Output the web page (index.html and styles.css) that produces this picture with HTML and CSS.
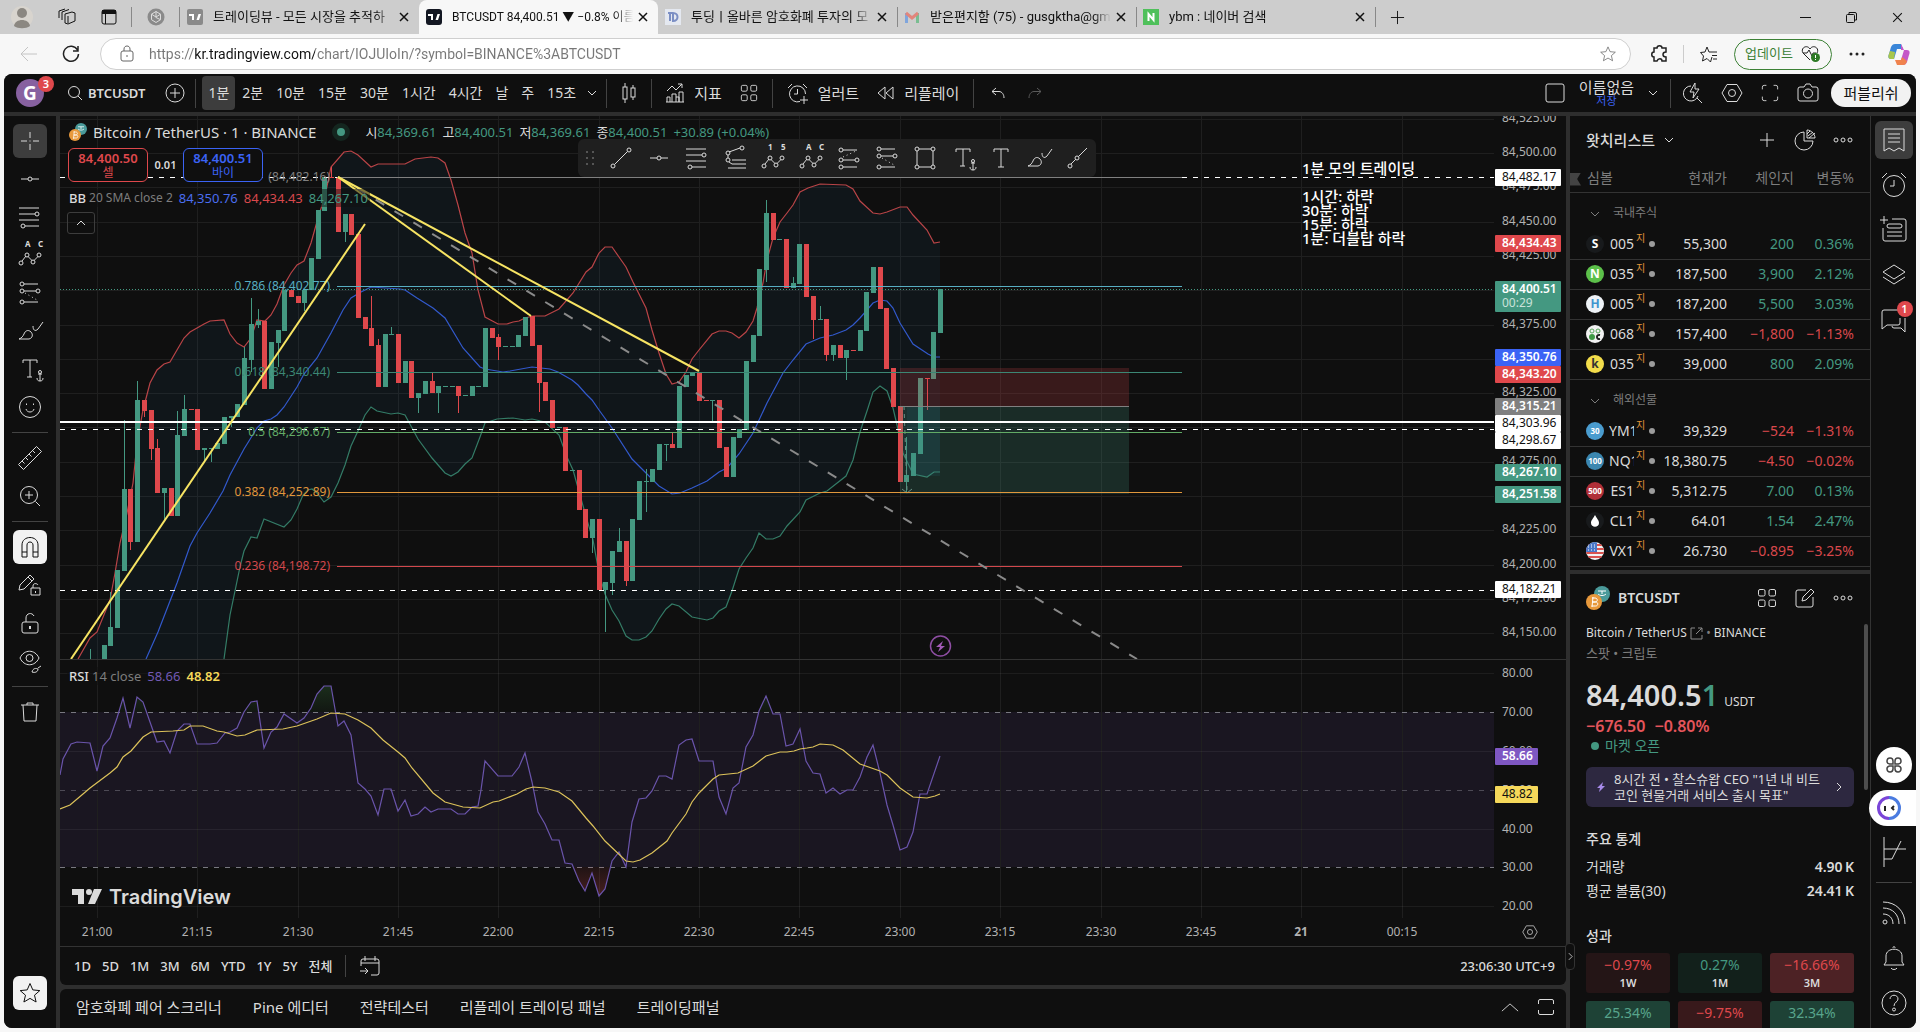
FILE: index.html
```html
<!DOCTYPE html>
<html lang="ko">
<head>
  <meta charset="UTF-8">
  <title>BTCUSDT 84,400.51 ▼ −0.8% 이름없음</title>
  <link rel="stylesheet" href="styles.css">
</head>
<body>

<!-- icon set -->
<svg class="sprite" aria-hidden="true">
  <symbol id="i-x" viewBox="0 0 12 12"><path d="M2 2l8 8M10 2l-8 8"/></symbol>
  <symbol id="i-plus" viewBox="0 0 16 16"><path d="M8 1v14M1 8h14"/></symbol>
  <symbol id="i-down" viewBox="0 0 10 6"><path d="M1 1l4 4 4-4"/></symbol>
  <symbol id="i-right" viewBox="0 0 6 10"><path d="M1 1l4 4-4 4"/></symbol>
  <symbol id="i-up" viewBox="0 0 20 10"><path d="M1 9l9-8 9 8"/></symbol>
  <symbol id="i-dots" viewBox="0 0 20 6"><circle cx="3" cy="3" r="2"/><circle cx="10" cy="3" r="2"/><circle cx="17" cy="3" r="2"/></symbol>
  <symbol id="i-grid" viewBox="0 0 20 20"><rect x="1.500" y="1.500" width="6.500" height="6.500" rx="1.500"/><rect x="12" y="1.500" width="6.500" height="6.500" rx="1.500"/><rect x="1.500" y="12" width="6.500" height="6.500" rx="1.500"/><rect x="12" y="12" width="6.500" height="6.500" rx="1.500"/></symbol>
  <symbol id="i-star" viewBox="0 0 24 24"><path d="M12 2.500l2.800 6.400 7 .7-5.300 4.600 1.600 6.800-6.100-3.600-6.100 3.600 1.600-6.800-5.300-4.600 7-.7z"/></symbol>
  <symbol id="i-cross" viewBox="0 0 28 28"><path d="M14 5v6M14 17v6M5 14h6M17 14h6M13.500 14h1"/></symbol>
  <symbol id="i-trend" viewBox="0 0 28 28"><circle cx="6" cy="22" r="2"/><circle cx="22" cy="6" r="2"/><path d="M7.500 20.500l13-13"/></symbol>
  <symbol id="i-hline" viewBox="0 0 28 28"><path d="M5 14h7M16 14h7"/><circle cx="14" cy="14" r="2"/></symbol>
  <symbol id="i-fib" viewBox="0 0 28 28"><path d="M3 5h20M3 11h16M3 17h20M9 23h14"/><circle cx="21" cy="11" r="2"/><circle cx="7" cy="23" r="2"/></symbol>
  <symbol id="i-fibext" viewBox="0 0 28 28"><path d="M7 14v-3M8 8l11-4M8 18l3 2M11 16h14M11 20h14M7 24h18"/><circle cx="7" cy="9" r="2"/><circle cx="21" cy="4" r="2"/><circle cx="7" cy="16" r="2"/></symbol>
  <symbol id="i-wave" viewBox="0 0 28 28"><circle cx="5" cy="22" r="2"/><circle cx="11" cy="14" r="2"/><circle cx="17" cy="21" r="2"/><circle cx="23" cy="14" r="2"/><path d="M6 20l4-5M12 15.500l4 4M18 19.500l4-4"/></symbol>
  <symbol id="i-long" viewBox="0 0 28 28"><circle cx="6" cy="6" r="2"/><circle cx="6" cy="16" r="2"/><circle cx="22" cy="16" r="2"/><circle cx="6" cy="23" r="2"/><path d="M8 6h14M8 16h12M8 23h14"/><path stroke-dasharray="1 3" d="M8 13l13-6"/></symbol>
  <symbol id="i-short" viewBox="0 0 28 28"><circle cx="6" cy="5" r="2"/><circle cx="6" cy="12" r="2"/><circle cx="22" cy="12" r="2"/><circle cx="6" cy="23" r="2"/><path d="M8 5h14M8 12h12M8 23h14"/><path stroke-dasharray="1 3" d="M9 14l12 7"/></symbol>
  <symbol id="i-rect" viewBox="0 0 28 28"><circle cx="6" cy="5" r="2"/><circle cx="22" cy="5" r="2"/><circle cx="6" cy="23" r="2"/><circle cx="22" cy="23" r="2"/><path d="M8 5h12M8 23h12M6 7v14M22 7v14"/></symbol>
  <symbol id="i-textanchor" viewBox="0 0 28 28"><path d="M7 8V5h14v3M14 5v17M11 22h5M24 18v8M21 23c0 2 1 3 3 3s3-1 3-3M22 19h4"/><circle cx="24" cy="17" r="1.500"/></symbol>
  <symbol id="i-text" viewBox="0 0 28 28"><path d="M7 8V5h14v3M14 5v18M11 23h6"/></symbol>
  <symbol id="i-brush" viewBox="0 0 28 28"><path d="M3 22h10c4-1 4-5 2-7-3-3-6-1-7 2-1 2-2 4-5 5zM17 9c0 4 2 6 5 3l5-7"/></symbol>
  <symbol id="i-path" viewBox="0 0 28 28"><circle cx="7" cy="22" r="2"/><circle cx="14" cy="14" r="2"/><path d="M8 20l5-5M15.500 12.500L24 4"/></symbol>
  <symbol id="i-smile" viewBox="0 0 28 28"><circle cx="14" cy="14" r="10.500"/><path d="M10 16c1 4 7 4 8 0M10.500 10.500v1.500M17.500 10.500v1.500"/></symbol>
  <symbol id="i-ruler" viewBox="0 0 28 28"><path d="M2.500 20.500L20.500 2.500l5 5-18 18zM6 17l2.500 2.500M9.500 13.500l2.500 2.500M13 10l2.500 2.500M16.500 6.500L19 9"/></symbol>
  <symbol id="i-zoom" viewBox="0 0 28 28"><circle cx="13" cy="13" r="8.500"/><path d="M19.500 19.500L24 24M9 13h8M13 9v8"/></symbol>
  <symbol id="i-magnet" viewBox="0 0 28 28"><path d="M6 24V12c0-10 16-10 16 0v12h-5V12c0-4-6-4-6 0v12zM6 19h5M17 19h5"/></symbol>
  <symbol id="i-pencillock" viewBox="0 0 28 28"><path d="M3 19l1-5L14 4l4 4L8 18zM12 6l4 4M15 17h9v7h-9zM17 17v-2c0-3 4-3 5-1"/><path d="M19.500 20v2"/></symbol>
  <symbol id="i-lock" viewBox="0 0 28 28"><rect x="6" y="13" width="16" height="11" rx="2"/><path d="M10 13V9c0-5 6-6 8-2" /><path stroke-width="2" d="M14 17v3"/></symbol>
  <symbol id="i-eye" viewBox="0 0 28 28"><path d="M4 11c4-9 15-9 19 0-4 9-15 9-19 0z"/><circle cx="13.500" cy="11" r="3.500"/><path d="M16 25c1-4 4-4 6-3 0 3-3 4-6 3zM22 21l3-2"/></symbol>
  <symbol id="i-trash" viewBox="0 0 28 28"><path d="M5 7h18M11 7V5h6v2M7 7l1 16h12l1-16"/></symbol>
  <symbol id="i-hex" viewBox="0 0 22 22"><path d="M6 2.500h10l5 8.500-5 8.500H6L1 11z"/><circle cx="11" cy="11" r="3.500"/></symbol>
  <symbol id="i-full" viewBox="0 0 20 20"><path d="M1.500 6V3.500a2 2 0 0 1 2-2H6M14 1.500h2.500a2 2 0 0 1 2 2V6M18.500 14v2.500a2 2 0 0 1-2 2H14M6 18.500H3.500a2 2 0 0 1-2-2V14"/></symbol>
  <symbol id="i-alarm" viewBox="0 0 28 28"><circle cx="14" cy="15" r="10.500"/><path d="M14 9v6h-4M2 7l5-5M26 7l-5-5"/></symbol>
  <symbol id="coin" viewBox="0 0 24 24"><circle cx="16" cy="8" r="8" fill="#4a9a9a" stroke="none"/><path d="M12 5h8M16 5v3M12 8c2 2 6 2 8 0" stroke="#fff"/><circle cx="8" cy="16" r="8" fill="#e8993c" stroke="none"/><path d="M6 12h3c3 0 3 4 0 4H6.500h3c3 0 3 4 0 4H5.500M7 11l-1 10" stroke="#fff"/></symbol>
</svg>

<!-- browser tabs -->
<div class="tabstrip">
  <div class="tab-tools">
    <svg width="22" height="26" viewBox="0 0 22 26"><circle cx="11" cy="13" r="11" fill="#d8d4ce" stroke="none"/><circle cx="11" cy="9" r="5" fill="#8b8781" stroke="none"/><path d="M3 22c1-8 15-8 16 0-4 3-12 3-16 0z" fill="#8b8781" stroke="none"/></svg>
    <svg width="18" height="18" viewBox="0 0 18 18"><path d="M7 6l7-2 3 1v8l-7 3-3-1zM4 12V4l7-2.500M1 10V3l6-2M10 8v7"/></svg>
    <svg width="16" height="16" viewBox="0 0 16 16"><rect x="1" y="1" width="14" height="14" rx="2"/><path d="M1 3h14" stroke-width="4"/><path d="M4.500 5v10"/></svg>
  </div>
  <div class="tab-pin"><svg width="18" height="18" viewBox="0 0 18 18"><circle cx="9" cy="9" r="8.500" fill="#8a8a8a" stroke="none"/><path stroke="#ddd" d="M9 3.500l4.500 2.700v5.500L9 14.500l-4.500-2.800V6.200zM9 3.500v6l4.500 2.200M4.500 6.200L9 9l4.500-2.800"/></svg></div>
  <div class="tab">
    <svg class="fav" width="16" height="16" viewBox="0 0 16 16"><rect width="16" height="16" rx="2" fill="#8a8a8a" stroke="none"/><path d="M2 5h5v6H5V7H2zM9.500 11l2-6H14l-2 6z" fill="#fff" stroke="none"/></svg>
    <span class="tab-title">트레이딩뷰 - 모든 시장을 추적하</span><button class="tab-x" aria-label="탭 닫기"><svg width="12" height="12"><use href="#i-x"/></svg></button>
  </div>
  <div class="tab active">
    <svg class="fav" width="16" height="16" viewBox="0 0 16 16"><rect width="16" height="16" rx="3" fill="#131722" stroke="none"/><path d="M2 5h5v6H5V7H2zM9.500 11l2-6H14l-2 6z" fill="#fff" stroke="none"/></svg>
    <span class="tab-title long">BTCUSDT 84,400.51 ▼ −0.8% 이름</span><button class="tab-x" aria-label="탭 닫기"><svg width="12" height="12"><use href="#i-x"/></svg></button>
  </div>
  <div class="tab">
    <svg class="fav" width="16" height="16" viewBox="0 0 16 16"><rect width="16" height="16" fill="#e4e8f0" stroke="none"/><path d="M3 4h4M5 4v8M8 4c6 0 6 8 0 8z" stroke="#7c8fc4" stroke-width="2"/></svg>
    <span class="tab-title">투딩ㅣ올바른 암호화폐 투자의 모</span><button class="tab-x" aria-label="탭 닫기"><svg width="12" height="12"><use href="#i-x"/></svg></button>
  </div>
  <div class="tab line">
    <svg class="fav" width="16" height="16" viewBox="0 0 16 16"><path d="M2.500 14V4" stroke="#7fa5dc" stroke-width="3"/><path d="M13.500 14V4" stroke="#79bd91" stroke-width="3"/><path d="M2 4l6 5 6-5" stroke="#e2857b" stroke-width="3"/></svg>
    <span class="tab-title">받은편지함 (75) - gusgktha@gma</span><button class="tab-x" aria-label="탭 닫기"><svg width="12" height="12"><use href="#i-x"/></svg></button>
  </div>
  <div class="tab line">
    <svg class="fav" width="16" height="16" viewBox="0 0 16 16"><rect width="16" height="16" fill="#4fc05b" stroke="none"/><path d="M5.500 12V5l5 6V4" stroke="#fff" stroke-width="2"/></svg>
    <span class="tab-title">ybm : 네이버 검색</span><button class="tab-x" aria-label="탭 닫기"><svg width="12" height="12"><use href="#i-x"/></svg></button>
  </div>
  <button class="newtab" aria-label="새 탭"><svg width="15" height="15"><use href="#i-plus"/></svg></button>
  <div class="win">
    <button aria-label="최소화"><svg width="11" height="11" viewBox="0 0 11 11"><path d="M0 5.500h11"/></svg></button>
    <button aria-label="복원"><svg width="11" height="11" viewBox="0 0 11 11"><rect x=".5" y="2.500" width="8" height="8" rx="1"/><path d="M3 2.500V.5h6a1.500 1.500 0 0 1 1.500 1.500v6h-2"/></svg></button>
    <button aria-label="닫기"><svg width="13" height="13"><use href="#i-x"/></svg></button>
  </div>
</div>

<!-- address bar -->
<div class="navbar">
  <button class="nav back" aria-label="뒤로"><svg width="18" height="16" viewBox="0 0 18 16"><path d="M17 8H1M8 1L1 8l7 7"/></svg></button>
  <button class="nav" aria-label="새로 고침"><svg width="18" height="18" viewBox="0 0 18 18"><path stroke-width="1.500" d="M15.500 5A7.500 7.500 0 1 0 16.500 9M16 1v5h-5"/></svg></button>
  <div class="urlbox">
    <svg width="14" height="18" viewBox="0 0 14 18"><rect x="1" y="6" width="12" height="10" rx="2"/><path d="M4 6V4c0-4 6-4 6 0v2M7 10v2"/></svg>
    <input type="text" aria-label="주소" value="https://kr.tradingview.com/chart/IOJUIoIn/?symbol=BINANCE%3ABTCUSDT">
    <button aria-label="즐겨찾기 추가"><svg width="18" height="18"><use href="#i-star"/></svg></button>
  </div>
  <button class="nav" aria-label="확장"><svg width="18" height="18" viewBox="0 0 18 18"><path stroke-width="1.500" d="M6 3c0-3 5-3 5 0h4v4c-4 0-4 5 0 5v4h-4c0-3-4-3-5 0H3v-4c-3 0-3-5 0-5V3z"/></svg></button>
  <i class="vline"></i>
  <button class="nav" aria-label="즐겨찾기"><svg width="18" height="18" viewBox="0 0 18 18"><path d="M12 12l-1.500 5L7 13.500 2.500 16l1-5L.5 7.500 5 7l2-5 2 5h8M12 10.500h5M13 14h4"/></svg></button>
  <button class="update">업데이트 <svg width="20" height="18" viewBox="0 0 20 18"><path stroke="#222" d="M9 15L2 8c-3-5 4-9 7-4 3-5 10-1 7 4M2 8h4l2-3 3 6 1-3h3"/><circle cx="14.500" cy="12.500" r="4.500" fill="#2d7a25" stroke="none"/><path stroke="#fff" d="M14.500 10v3M14.500 14v1"/></svg></button>
  <button class="nav" aria-label="설정"><svg width="16" height="4" viewBox="0 0 16 4"><g fill="#222" stroke="none"><circle cx="2" cy="2" r="1.500"/><circle cx="8" cy="2" r="1.500"/><circle cx="14" cy="2" r="1.500"/></g></svg></button>
  <button class="nav" aria-label="Copilot"><svg width="22" height="22" viewBox="0 0 22 22"><path d="M7 1h6l2 5H9L6 16H3c-3 0-3-3-2-5l2-7c1-2 2-3 4-3z" fill="#3a86d8" stroke="none"/><path d="M3 16c-3 0-3-3-2-5l1-3 5 1-1 7z" fill="#a8c64a" stroke="none"/><path d="M13 1l3 6h3c3 0 3 3 2 5l-2 7c-1 2-2 3-4 3H9l4-5 3-10h-3z" fill="#c558c8" stroke="none"/><path d="M9 22l-2-5h6l1-3 5 4c-1 3-2 4-4 4z" fill="#f0834e" stroke="none"/></svg></button>
</div>

<div class="app">

  <!-- chart header -->
  <header class="topbar">
    <button class="avatar" aria-label="계정">G<span class="badge">3</span></button>
    <button class="tb symbol"><svg width="16" height="16" viewBox="0 0 16 16"><circle cx="7" cy="7" r="5.500"/><path d="M11 11l4 4"/></svg>BTCUSDT</button>
    <button class="tb" aria-label="비교"><svg width="20" height="20" viewBox="0 0 20 20"><circle cx="10" cy="10" r="9"/><path d="M10 5v10M5 10h10"/></svg></button>
    <i class="vline"></i>
    <div class="intervals">
      <button class="tb on">1분</button><button class="tb">2분</button><button class="tb">10분</button><button class="tb">15분</button><button class="tb">30분</button><button class="tb">1시간</button><button class="tb">4시간</button><button class="tb">날</button><button class="tb">주</button><button class="tb">15초</button>
      <button class="tb" aria-label="더보기"><svg width="10" height="6"><use href="#i-down"/></svg></button>
    </div>
    <i class="vline"></i>
    <button class="tb" aria-label="캔들"><svg width="16" height="20" viewBox="0 0 16 20"><path d="M4 0v4M4 16v4M12 2v3M12 14v3"/><rect x="2" y="4" width="4" height="12"/><rect x="10" y="5" width="4" height="9"/></svg></button>
    <i class="vline"></i>
    <button class="tb big"><svg width="19" height="20" viewBox="0 0 19 20"><path d="M1 8l5-5 4 4 6-6M12 1h4v4M1 19v-5h3v5M6 19v-8h4v8M10 14h3v5M13 19V9h4v10M0 19h18"/></svg>지표</button>
    <button class="tb" aria-label="템플릿"><svg width="18" height="18"><use href="#i-grid"/></svg></button>
    <i class="vline"></i>
    <button class="tb big"><svg width="22" height="22" viewBox="0 0 22 22"><path d="M13 19.500A8 8 0 1 1 18.500 12M10.500 7v5H7M1 6l4-4M20 6l-4-4M17 14v8M13 18h8"/></svg>얼러트</button>
    <button class="tb big"><svg width="18" height="14" viewBox="0 0 18 14"><path d="M8 1v12L1 7zM16 1v12L9 7z"/></svg>리플레이</button>
    <i class="vline"></i>
    <button class="tb undo" aria-label="실행 취소"><svg width="14" height="12" viewBox="0 0 14 12"><path d="M5 1L1 4.500 5 8M1 4.500h7c3 0 5 3 5 6.500"/></svg></button>
    <button class="tb undo dim" aria-label="다시 실행"><svg width="14" height="12" viewBox="0 0 14 12"><path d="M9 1l4 3.500L9 8M13 4.500H6c-3 0-5 3-5 6.500"/></svg></button>
    <div class="topright">
      <button class="tb" aria-label="레이아웃"><svg width="20" height="20" viewBox="0 0 20 20"><rect x="1" y="1" width="18" height="18" rx="2"/></svg></button>
      <button class="tb layoutname"><span>이름없음</span><small>저장</small></button>
      <button class="tb" aria-label="레이아웃 관리"><svg width="10" height="6"><use href="#i-down"/></svg></button>
      <i class="vline"></i>
      <button class="tb" aria-label="빠른 찾기"><svg width="20" height="22" viewBox="0 0 20 22"><path d="M8 4a7.500 7.500 0 1 0 7 10M14 16l5 5M12 1L7 10h4l-1 6 6-9h-4z"/></svg></button>
      <button class="tb" aria-label="설정"><svg width="22" height="22"><use href="#i-hex"/></svg></button>
      <button class="tb" aria-label="풀스크린"><svg width="18" height="18"><use href="#i-full"/></svg></button>
      <button class="tb" aria-label="스냅샷"><svg width="22" height="20" viewBox="0 0 22 20"><path d="M3 4h4l2-3h4l2 3h4a2 2 0 0 1 2 2v10a2 2 0 0 1-2 2H3a2 2 0 0 1-2-2V6a2 2 0 0 1 2-2z"/><circle cx="11" cy="10.500" r="4.500"/></svg></button>
      <button class="publish">퍼블리쉬</button>
    </div>
  </header>

  <!-- drawing tools -->
  <nav class="tools">
    <button class="on" aria-label="커서"><svg width="28" height="28"><use href="#i-cross"/></svg></button>
    <button aria-label="추세선"><svg width="28" height="28"><use href="#i-hline"/></svg></button>
    <button aria-label="피보나치"><svg width="28" height="28"><use href="#i-fib"/></svg></button>
    <button class="letters" aria-label="패턴"><span>A</span><span>C</span><svg width="28" height="28"><use href="#i-wave"/></svg></button>
    <button aria-label="예측"><svg width="28" height="28"><use href="#i-short"/></svg></button>
    <button aria-label="브러시"><svg width="28" height="28"><use href="#i-brush"/></svg></button>
    <button aria-label="텍스트"><svg width="28" height="28"><use href="#i-textanchor"/></svg></button>
    <button aria-label="아이콘"><svg width="28" height="28"><use href="#i-smile"/></svg></button>
    <hr>
    <button aria-label="측정"><svg width="28" height="28"><use href="#i-ruler"/></svg></button>
    <button aria-label="확대"><svg width="28" height="28"><use href="#i-zoom"/></svg></button>
    <hr>
    <button class="white" aria-label="자석"><svg width="28" height="28"><use href="#i-magnet"/></svg></button>
    <button aria-label="그리기 유지"><svg width="28" height="28"><use href="#i-pencillock"/></svg></button>
    <button aria-label="잠그기"><svg width="28" height="28"><use href="#i-lock"/></svg></button>
    <button aria-label="숨기기"><svg width="28" height="28"><use href="#i-eye"/></svg></button>
    <hr>
    <button aria-label="제거"><svg width="28" height="28"><use href="#i-trash"/></svg></button>
    <button class="white last" aria-label="즐겨찾기"><svg width="24" height="24"><use href="#i-star"/></svg></button>
  </nav>

  <main class="center">
    <section class="chart">
      <div class="pane">
        <svg id="plot" class="fill"></svg>
        <div class="legend">
          <div class="title-row">
            <svg width="18" height="20"><use href="#coin"/></svg>
            <h1>Bitcoin / TetherUS · 1 · BINANCE</h1>
            <i class="live"></i>
            <span class="ohlc"><b>시</b>84,369.61</span>
            <span class="ohlc"><b>고</b>84,400.51</span>
            <span class="ohlc"><b>저</b>84,369.61</span>
            <span class="ohlc"><b>종</b>84,400.51</span>
            <span class="ohlc">+30.89 (+0.04%)</span>
          </div>
          <div class="trade-row">
            <button class="sell">84,400.50<span>셀</span></button>
            <span class="spread">0.01</span>
            <button class="buy">84,400.51<span>바이</span></button>
          </div>
          <div class="ind-row"><b>BB</b><span class="mute">20 SMA close 2</span><span class="c-blue">84,350.76</span><span class="c-red">84,434.43</span><span class="c-green">84,267.10</span></div>
          <button class="collapse" aria-label="접기"><svg width="10" height="6" viewBox="0 0 10 6"><path d="M1 5l4-4 4 4"/></svg></button>
        </div>
        <div class="note">1분 모의 트레이딩<br><br>1시간: 하락<br>30분: 하락<br>15분: 하락<br>1분: 더블탑 하락</div>
        <div class="favbar">
          <svg class="grip" width="8" height="14" viewBox="0 0 8 14"><path stroke-dasharray="2 4" stroke-width="2" d="M1 0v14M7 0v14"/></svg>
          <button aria-label="추세선"><svg width="28" height="28"><use href="#i-trend"/></svg></button>
          <button aria-label="가로줄"><svg width="28" height="28"><use href="#i-hline"/></svg></button>
          <button aria-label="되돌림"><svg width="28" height="28"><use href="#i-fib"/></svg></button>
          <button aria-label="확장"><svg width="28" height="28"><use href="#i-fibext"/></svg></button>
          <button class="letters" aria-label="엘리엇 임펄스"><span>1</span><span>5</span><svg width="28" height="28"><use href="#i-wave"/></svg></button>
          <button class="letters" aria-label="엘리엇 조정"><span>A</span><span>C</span><svg width="28" height="28"><use href="#i-wave"/></svg></button>
          <button aria-label="롱 포지션"><svg width="28" height="28"><use href="#i-long"/></svg></button>
          <button aria-label="숏 포지션"><svg width="28" height="28"><use href="#i-short"/></svg></button>
          <button aria-label="사각형"><svg width="28" height="28"><use href="#i-rect"/></svg></button>
          <button aria-label="앵커 텍스트"><svg width="28" height="28"><use href="#i-textanchor"/></svg></button>
          <button aria-label="텍스트"><svg width="28" height="28"><use href="#i-text"/></svg></button>
          <button aria-label="브러시"><svg width="28" height="28"><use href="#i-brush"/></svg></button>
          <button aria-label="패스"><svg width="28" height="28"><use href="#i-path"/></svg></button>
        </div>
      </div>
      <div class="axis"><svg id="priceAxis" class="fill"></svg></div>
      <div class="pane rsi">
        <svg id="rsiPlot" class="fill"></svg>
        <div class="ind-row rsi-legend"><b>RSI</b><span class="mute">14 close</span><span class="c-purple">58.66</span><span class="c-yellow">48.82</span></div>
        <a class="tvlogo" href="#"><svg width="30" height="16" viewBox="0 0 30 16"><path fill="#dbdbdb" stroke="none" d="M0 0h12v15H6V6H0zM22 0h8l-7 15h-7z"/><circle cx="17" cy="3" r="3" fill="#dbdbdb" stroke="none"/></svg>TradingView</a>
      </div>
      <div class="axis rsi"><svg id="rsiAxis" class="fill"></svg></div>
      <div class="timeaxis"><svg id="timeAxis" class="fill"></svg></div>
      <div class="axis-gear"><button aria-label="축 설정"><svg width="16" height="16"><use href="#i-hex"/></svg></button></div>
    </section>
    <div class="ranges">
      <button>1D</button><button>5D</button><button>1M</button><button>3M</button><button>6M</button><button>YTD</button><button>1Y</button><button>5Y</button><button>전체</button>
      <i class="vline"></i>
      <button aria-label="날짜로 이동"><svg width="20" height="20" viewBox="0 0 20 20"><path d="M1 10V5a2 2 0 0 1 2-2h14a2 2 0 0 1 2 2v12a2 2 0 0 1-2 2h-6M1 7h18M5 0v5M15 0v5M0 15h8M5 12l3 3-3 3"/></svg></button>
      <span class="clock">23:06:30 UTC+9</span>
    </div>
    <div class="bottomtabs">
      <button>암호화폐 페어 스크리너</button><button>Pine 에디터</button><button>전략테스터</button><button>리플레이 트레이딩 패널</button><button>트레이딩패널</button>
      <div class="bt-right">
        <button aria-label="열기"><svg width="18" height="9"><use href="#i-up"/></svg></button>
        <button aria-label="최대화"><svg width="18" height="18"><path d="M1.500 6V3a1.500 1.500 0 0 1 1.500-1.500h12A1.500 1.500 0 0 1 16.500 3v3M16.500 12v3a1.500 1.500 0 0 1-1.500 1.500H3A1.500 1.500 0 0 1 1.500 15v-3"/></svg></button>
      </div>
    </div>
    <button class="handle" aria-label="패널 접기"><svg width="5" height="9"><use href="#i-right"/></svg></button>
  </main>

  <aside class="side">
    <section class="watch">
      <div class="side-head">
        <button class="wl-name">왓치리스트 <svg width="10" height="6"><use href="#i-down"/></svg></button>
        <button aria-label="심볼 추가"><svg width="16" height="16"><use href="#i-plus"/></svg></button>
        <button aria-label="분석"><svg width="22" height="22" viewBox="0 0 22 22"><path d="M10 3a9 9 0 1 0 9 9h-9zM13 1c4 0 8 4 8 8h-8zM14 7l5-4M15 9l6-5M13 5l3-3"/></svg></button>
        <button aria-label="더보기"><svg width="20" height="6"><use href="#i-dots"/></svg></button>
      </div>
      <table>
        <colgroup><col><col class="w-price"><col class="w-chg"><col class="w-pct"></colgroup>
        <thead><tr><th>심볼</th><th>현재가</th><th>체인지</th><th>변동%</th></tr></thead>
        <tbody>
          <tr class="group"><td colspan="4"><svg width="10" height="6"><use href="#i-down"/></svg>국내주식</td></tr>
          <tr><td><div class="tick"><i class="lg l-s">S</i><span>005</span><sup>지</sup><i class="pt"></i></div></td><td>55,300</td><td class="up">200</td><td class="up">0.36%</td></tr>
          <tr><td><div class="tick"><i class="lg l-n">N</i><span>035</span><sup>지</sup><i class="pt"></i></div></td><td>187,500</td><td class="up">3,900</td><td class="up">2.12%</td></tr>
          <tr><td><div class="tick"><i class="lg l-h">H</i><span>005</span><sup>지</sup><i class="pt"></i></div></td><td>187,200</td><td class="up">5,500</td><td class="up">3.03%</td></tr>
          <tr><td><div class="tick"><i class="lg l-c"><svg width="12" height="12" viewBox="0 0 12 12"><circle cx="3" cy="3" r="2" stroke="#57a55a"/><circle cx="9" cy="3" r="2" stroke="#57a55a"/><circle cx="3" cy="9" r="3" fill="#3f9a45" stroke="none"/><path d="M11 7c-4-1-4 5 0 4" stroke="#222" stroke-width="2"/></svg></i><span>068</span><sup>지</sup><i class="pt"></i></div></td><td>157,400</td><td class="dn">−1,800</td><td class="dn">−1.13%</td></tr>
          <tr><td><div class="tick"><i class="lg l-k">k</i><span>035</span><sup>지</sup><i class="pt"></i></div></td><td>39,000</td><td class="up">800</td><td class="up">2.09%</td></tr>
          <tr class="group"><td colspan="4"><svg width="10" height="6"><use href="#i-down"/></svg>해외선물</td></tr>
          <tr><td><div class="tick"><i class="lg sm l-30">30</i><span>YM1</span><sup>지</sup><i class="pt"></i></div></td><td>39,329</td><td class="dn">−524</td><td class="dn">−1.31%</td></tr>
          <tr><td><div class="tick"><i class="lg sm l-100">100</i><span>NQ1</span><sup>지</sup><i class="pt"></i></div></td><td>18,380.75</td><td class="dn">−4.50</td><td class="dn">−0.02%</td></tr>
          <tr><td><div class="tick"><i class="lg sm l-500">500</i><span>ES1</span><sup>지</sup><i class="pt"></i></div></td><td>5,312.75</td><td class="up">7.00</td><td class="up">0.13%</td></tr>
          <tr><td><div class="tick"><i class="lg l-s"><svg width="8" height="12" viewBox="0 0 8 12"><path d="M4 0c2 4 4 5 4 8 0 5-8 5-8 0 0-3 2-4 4-8z" fill="#fff" stroke="none"/></svg></i><span>CL1</span><sup>지</sup><i class="pt"></i></div></td><td>64.01</td><td class="up">1.54</td><td class="up">2.47%</td></tr>
          <tr><td><div class="tick"><i class="lg l-us"><svg width="18" height="18" viewBox="0 0 18 18"><path stroke="#d9534f" stroke-width="2" d="M0 3h18M0 7h18M0 11h18M0 15h18"/><rect width="11" height="10" fill="#4a78c8" stroke="none"/><path stroke="#fff" stroke-dasharray="1 2" d="M2 3h8M2 5h8M2 8h8"/></svg></i><span>VX1</span><sup>지</sup><i class="pt"></i></div></td><td>26.730</td><td class="dn">−0.895</td><td class="dn">−3.25%</td></tr>
        </tbody>
      </table>
    </section>

    <section class="detail">
      <div class="side-head">
        <svg width="24" height="24"><use href="#coin"/></svg><h2>BTCUSDT</h2>
        <button aria-label="보기"><svg width="20" height="20"><use href="#i-grid"/></svg></button>
        <button aria-label="메모"><svg width="20" height="20" viewBox="0 0 20 20"><path d="M11 2H3a2 2 0 0 0-2 2v13a2 2 0 0 0 2 2h13a2 2 0 0 0 2-2V9M7 13l1-4 8-8 3 3-8 8z"/></svg></button>
        <button aria-label="더보기"><svg width="20" height="6"><use href="#i-dots"/></svg></button>
      </div>
      <div class="detail-body">
        <p class="name"><a href="#">Bitcoin / TetherUS <svg width="13" height="13" viewBox="0 0 13 13"><path d="M5 1H1v11h11V8M8 1h4v4M12 1L6 7"/></svg></a> <i>•</i> BINANCE</p>
        <p class="kind">스팟 • 크립토</p>
        <p class="price">84,400.5<em>1</em><small>USDT</small></p>
        <p class="delta"><span>−676.50</span><span>−0.80%</span></p>
        <p class="market"><i></i>마켓 오픈</p>
        <a class="news" href="#"><svg width="8" height="10" viewBox="0 0 8 10"><path d="M6 0L0 6h3l-1 4 6-6H5z" fill="#a78bea" stroke="none"/></svg><span>8시간 전 • 찰스슈왑 CEO "1년 내 비트코인 현물거래 서비스 출시 목표"</span><svg width="6" height="10"><use href="#i-right"/></svg></a>
        <h3>주요 통계</h3>
        <dl>
          <div><dt>거래량</dt><dd>4.90&#8239;K</dd></div>
          <div><dt>평균 볼륨(30)</dt><dd>24.41&#8239;K</dd></div>
        </dl>
        <h3 class="perf-title">성과</h3>
        <div class="perf">
          <div class="r1">−0.97%<b>1W</b></div><div class="g1">0.27%<b>1M</b></div><div class="r3">−16.66%<b>3M</b></div>
          <div class="g3">25.34%</div><div class="r2">−9.75%</div><div class="g3">32.34%</div>
        </div>
      </div>
      <i class="scroll"></i>
    </section>
  </aside>

  <nav class="rail">
    <button class="on" aria-label="왓치리스트"><svg width="28" height="28" viewBox="0 0 28 28"><path d="M4 3h20v22l-5-3-5 3-5-3-5 3zM8 8h12M8 12h12M8 16h12"/></svg></button>
    <button aria-label="얼러트"><svg width="28" height="28"><use href="#i-alarm"/></svg></button>
    <button aria-label="뉴스"><svg width="28" height="28" viewBox="0 0 28 28"><path d="M3 12v11a2 2 0 0 0 2 2h19a2 2 0 0 0 2-2V5a2 2 0 0 0-2-2H12M4 0v8M0 4h8M7 16h15M7 20h15"/><rect x="7" y="8" width="15" height="4" rx="2"/></svg></button>
    <button aria-label="객체 트리"><svg width="28" height="28" viewBox="0 0 28 28"><path d="M14 4l11 7-11 7-11-7zM3 16l11 7 11-7"/></svg></button>
    <button class="chat" aria-label="대화"><svg width="28" height="28" viewBox="0 0 28 28"><path d="M18 4H4a2 2 0 0 0-2 2v17l5-4h11a2 2 0 0 0 2-2v-5M25 12v14l-4-4h-7a2 2 0 0 1-2-2"/></svg><span class="badge">1</span></button>
    <div class="rail-low">
      <button class="round" aria-label="위젯"><svg width="18" height="18" viewBox="0 0 18 18"><path stroke="#444" stroke-width="1.500" d="M8 8H4.500a3 3 0 1 1 3.500-3zM10 8V5a3 3 0 1 1 3.500 3zM8 10v3a3 3 0 1 1-3.500-3zM10 10h3.500a3 3 0 1 1-3.500 3z"/></svg></button>
      <button class="bot" aria-label="도우미"><svg width="24" height="24" viewBox="0 0 24 24"><path d="M12 1.500a10.500 10.500 0 0 1 0 21" stroke="#4a7be0" stroke-width="3"/><path d="M12 22.500a10.500 10.500 0 0 1 0-21" stroke="#7a45d8" stroke-width="3"/><path stroke="#222" stroke-width="2" d="M8 10v5M17 10l-2 2 2 2"/></svg></button>
      <button aria-label="파인"><svg width="28" height="32" viewBox="0 0 28 32"><path d="M4 1v30M4 13h22M21 5l-9 18H4"/></svg></button>
      <hr>
      <button aria-label="스트림"><svg width="28" height="28" viewBox="0 0 28 28"><circle cx="5" cy="23" r="2"/><path d="M3 15c6 0 10 4 10 10M3 9c10 0 16 7 16 16M3 3c13 0 22 9 22 22"/></svg></button>
      <button aria-label="알림"><svg width="28" height="28" viewBox="0 0 28 28"><path d="M4 21h20l-2-3v-6c0-9-16-9-16 0v6zM11 24c1 2 5 2 6 0M13 4c0-2 2-2 2 0"/></svg></button>
      <button aria-label="도움말"><svg width="28" height="28" viewBox="0 0 28 28"><circle cx="14" cy="14" r="12"/><path d="M10 10c0-5 8-5 8 0 0 3-4 3-4 7"/><circle cx="14" cy="20.500" r="1.500"/></svg></button>
    </div>
  </nav>
</div>

<script src="chart.js"></script>
</body>
</html>
```

FILE: styles.css
```css
* { box-sizing: border-box; }

html, body { height: 100%; }

body {
  margin: 0;
  display: flex;
  flex-direction: column;
  background: #f7f7f7;
  font-family: "Noto Sans", "Noto Sans CJK KR", sans-serif;
  font-size: 13px;
  line-height: 18px;
  overflow: hidden;
}

button, input { font: inherit; color: inherit; background: none; border: 0; padding: 0; margin: 0; }
button { cursor: pointer; display: inline-flex; align-items: center; justify-content: center; white-space: nowrap; }
svg { fill: none; stroke: currentColor; stroke-width: 1; flex: none; }
h1, h2, h3, p, dl, dd { margin: 0; }
a { color: inherit; text-decoration: none; }
.sprite { position: absolute; width: 0; height: 0; }
.vline { width: 1px; height: 29px; background: #434343; flex: none; }
.c-blue { color: #4a6df0; }
.c-red { color: #d9484c; }
.c-green { color: #449881; }
.c-purple { color: #7259b4; }
.c-yellow { color: #f5d85a; font-weight: 600; }

/* browser */
.tabstrip, .navbar { font-family: Roboto, "Noto Sans CJK KR", sans-serif; }
.tabstrip { display: flex; align-items: center; height: 34px; background: #cdcdcd; color: #111; flex: none; }
.tab-tools { display: flex; align-items: center; gap: 25px; width: 132px; padding-left: 11px; height: 20px; border-right: 1px solid #888; }
.tab-pin { width: 48px; height: 20px; display: flex; align-items: center; justify-content: center; border-right: 1px solid #888; }
.tab { display: flex; align-items: center; gap: 10px; width: 239px; height: 34px; padding: 0 9px 0 7px; position: relative; }
.tab.active { background: #f7f7f7; border-radius: 8px 8px 0 0; }
.tab.line::before { content: ""; position: absolute; left: 0; top: 7px; width: 1px; height: 20px; background: #888; }
.tab-title {
  flex: 1; overflow: hidden; white-space: nowrap; margin-right: -6px;
  -webkit-mask-image: linear-gradient(to right, #000 90%, transparent);
}
.tab-title.long { font-size: 12px; }
.tab-x svg { stroke-width: 1.5; }
.newtab { width: 44px; height: 20px; border-left: 1px solid #888; }
.win { margin-left: auto; display: flex; }
.win button { width: 46px; height: 34px; }
.navbar { display: flex; align-items: center; height: 40px; flex: none; color: #222; padding: 0 0 0 8px; }
.nav { width: 42px; height: 32px; }
.navbar .back { color: #c4c4c4; }
.urlbox {
  flex: 1; display: flex; align-items: center; gap: 15px; height: 32px; margin: 0 8px; padding: 0 13px 0 19px;
  background: #fff; border: 1px solid #cfcfcf; border-radius: 16px; color: #666;
}
.urlbox input {
  flex: 1; height: 30px; outline: 0; font-size: 14px;
  background: linear-gradient(to right, #777 46px, #111 46px, #111 166px, #777 166px);
  -webkit-background-clip: text; -webkit-text-fill-color: transparent;
}
.navbar .vline { height: 18px; background: #ccc; margin: 0 4px 0 2px; }
.update { width: 98px; height: 31px; gap: 8px; border: 1px solid #3c8135; border-radius: 16px; color: #3c8135; font-size: 13px; margin: 0 4px; }

/* layout of the app */
.app {
  flex: 1; min-height: 0; margin: 0 4px 4px; border-radius: 8px; overflow: hidden;
  display: grid; grid-template-columns: 52px minmax(0, 1fr) 300px 42px; grid-template-rows: 38px minmax(0, 1fr);
  column-gap: 4px; row-gap: 4px; background: #2e2e2e; color: #dbdbdb;
}
.app > * { background: #0f0f0f; }

.topbar { grid-column: 1 / -1; display: flex; align-items: center; font-size: 14px; padding: 0 5px 0 12px; }
.avatar { width: 28px; height: 28px; border-radius: 14px; background: #8761a0; color: #fff; font-size: 19px; font-weight: 700; position: relative; }
.badge {
  position: absolute; width: 16px; height: 16px; border-radius: 8px; background: #df484c; color: #fff;
  font-size: 11px; line-height: 16px; font-weight: 600; top: -3px; right: -10px;
}
.tb { height: 34px; padding: 0 6px; border-radius: 4px; gap: 9px; }
.tb.on { background: #3d3d3d; }
.tb.big { font-size: 15px; padding: 0 9px; }
.tb.symbol { font-weight: 600; gap: 5px; margin: 0 5px 0 17px; font-size: 13px; }
.topbar > .vline { margin: 0 5px; }
.topbar > .vline:nth-child(4) { margin: 0 6px 0 1px; }
.intervals { display: flex; gap: 1px; }
.intervals .tb:last-child { padding: 0 4px; }
.topbar > .tb:not(.big):not(.symbol) svg { margin: 0 3px; }
.undo { width: 37px; }
.dim { color: #5a5a5a; }
.topright { margin-left: auto; display: flex; align-items: center; gap: 6px; }
.layoutname { flex-direction: column; gap: 0; font-size: 15px; line-height: 15px; padding: 0 2px; }
.layoutname small { color: #3b63f5; font-size: 11px; line-height: 11px; }
.publish { width: 80px; height: 28px; border-radius: 14px; background: #f2f2f2; color: #0f0f0f; font-size: 15px; }

.tools { display: flex; flex-direction: column; align-items: center; gap: 4px; padding: 8px 0 18px; }
.tools button, .favbar button { width: 34px; height: 34px; border-radius: 6px; position: relative; }
.tools .on { background: #3d3d3d; }
.tools .white { background: #f2f2f2; color: #0f0f0f; }
.tools .last { margin-top: auto; }
.tools hr, .rail hr { width: 36px; height: 1px; border: 0; background: #434343; margin: 4px 0; flex: none; }
.letters span { position: absolute; top: 0; left: 12px; font-size: 8px; line-height: 11px; font-weight: 700; }
.letters span + span { left: 25px; }

.center { display: flex; flex-direction: column; position: relative; min-height: 0; background: #2e2e2e !important; }
.chart {
  flex: 1; min-height: 0; display: grid; background: #0f0f0f;
  grid-template-columns: minmax(0, 1fr) 72px; grid-template-rows: 543fr 259fr 28px;
}
.pane, .axis, .timeaxis { position: relative; overflow: hidden; min-height: 0; }
.rsi { border-top: 1px solid #333; }
.fill { display: block; width: 100%; height: 100%; }
.fill text { stroke: none; font-size: 12px; fill: #b2b2b2; }
.axis-gear { display: flex; justify-content: center; align-items: center; }

.legend { position: absolute; left: 7px; top: 5px; display: flex; flex-direction: column; align-items: flex-start; }
.title-row { display: flex; align-items: center; gap: 6px; height: 22px; padding-left: 2px; }
.title-row h1 { font-size: 15px; line-height: 22px; font-weight: 400; }
.live { width: 18px; height: 18px; border-radius: 9px; background: #449881; border: 5px solid #14261f; margin: 0 9px 0 10px; }
.ohlc { color: #449881; white-space: nowrap; }
.ohlc b { color: #dbdbdb; font-weight: 400; }
.trade-row { display: flex; align-items: center; margin-top: 5px; padding-left: 1px; }
.sell, .buy { flex-direction: column; width: 80px; height: 34px; border: 1px solid; border-radius: 6px; line-height: 15px; font-weight: 600; background: #0f0f0f; }
.sell span, .buy span { font-size: 12px; font-weight: 400; line-height: 14px; }
.sell { color: #df484c; }
.buy { color: #3b63f5; }
.spread { width: 35px; text-align: center; font-size: 11px; font-weight: 600; }
.ind-row { display: flex; gap: 6px; height: 18px; padding: 0 2px; background: rgba(15, 15, 15, .5); font-size: 13px; white-space: nowrap; }
.ind-row b { font-weight: 500; margin-right: -3px; }
.legend .ind-row { margin-top: 7px; }
.legend .mute { font-size: 12px; }
.mute { color: #7d7d7d; }
.rsi-legend { position: absolute; left: 7px; top: 7px; }
.collapse { width: 28px; height: 22px; margin-top: 5px; border: 1px solid #3d3d3d; border-radius: 3px; }
.note { position: absolute; left: 1242px; top: 45px; color: #fff; font-size: 15px; line-height: 14px; font-weight: 500; white-space: nowrap; }
.favbar { position: absolute; left: 518px; top: 23px; height: 38px; display: flex; align-items: center; gap: 4px; padding: 0 2px 0 8px; border-radius: 6px; background: #1f1f1f; }
.grip { color: #555; margin-right: 6px; }
.tvlogo { position: absolute; left: 12px; bottom: 9px; display: flex; align-items: center; gap: 7px; font: 600 20px/24px Inter, sans-serif; }

.ranges { display: flex; align-items: center; gap: 11px; height: 39px; padding: 0 11px 0 14px; border-top: 1px solid #333; background: #0f0f0f; border-radius: 0 0 6px 6px; font-weight: 500; }
.ranges button { height: 28px; }
.ranges .vline { height: 22px; margin: 0 3px 0 2px; }
.clock { margin-left: auto; }
.bottomtabs { display: flex; align-items: center; gap: 31px; height: 39px; margin-top: 4px; padding: 0 11px 3px 16px; background: #0f0f0f; border-radius: 6px 6px 0 0; font-size: 15px; }
.bt-right { margin-left: auto; display: flex; gap: 18px; }
.handle { position: absolute; right: -9px; bottom: 58px; width: 10px; height: 27px; border-radius: 4px; background: #0f0f0f; border: 1px solid #333; z-index: 2; }

/* right panel */
.side { display: flex; flex-direction: column; gap: 4px; background: #2e2e2e !important; min-height: 0; overflow: hidden; }
.side > section { background: #0f0f0f; }
.side-head { display: flex; align-items: center; height: 48px; padding-left: 16px; padding-right: 8px; }
.side-head button { width: 38px; height: 34px; }
.side-head .wl-name { width: auto; gap: 9px; font-size: 15px; font-weight: 500; margin-right: auto; }
.side-head h2 { font-size: 14px; font-weight: 600; margin-left: 8px; margin-right: auto; }
.watch { padding-bottom: 3px; }
.watch table { width: 100%; border-collapse: collapse; table-layout: fixed; font-size: 14px; }
.w-price { width: 80px; }
.w-chg { width: 67px; }
.w-pct { width: 76px; }
.watch th { height: 28px; padding: 0; text-align: right; font-weight: 400; color: #7d7d7d; border-bottom: 1px solid #333; }
.watch th:first-child { text-align: left; padding-left: 6px; }
.watch th:first-child::before { content: ""; display: inline-block; vertical-align: middle; width: 11px; height: 13px; margin-left: -6px; margin-right: 6px; background: #434343; clip-path: polygon(0 0, 100% 0, 65% 50%, 100% 100%, 0 100%); }
.watch td { height: 30px; padding: 0; text-align: right; border-bottom: 1px solid #333; white-space: nowrap; }
.watch th:last-child, .watch td:last-child { padding-right: 16px; }
.watch .group td { height: 37px; text-align: left; color: #7d7d7d; font-size: 12px; border-bottom: 0; padding: 4px 0 0 20px; }
.group svg { margin-right: 13px; vertical-align: middle; }
.up { color: #449881; }
.dn { color: #d9484c; }
.tick { display: flex; align-items: center; padding-left: 16px; width: 100px; }
.tick span { width: 25px; margin-left: 5px; overflow: hidden; }
.tick sup { color: #e0953a; font-size: 10px; line-height: 12px; margin: 0 4px 12px 2px; }
.pt { width: 6px; height: 6px; border-radius: 3px; background: #9c9c9c; flex: none; }
.lg { width: 18px; height: 18px; border-radius: 9px; overflow: hidden; display: flex; align-items: center; justify-content: center; font-style: normal; font-size: 12px; font-weight: 700; line-height: 18px; color: #fff; flex: none; }
.lg.sm { font-size: 8px; }
.l-s { background: #181a1c; }
.l-n { background: #5cc04a; }
.l-h { background: #eef2f6; color: #3f95cf; }
.l-c, .l-us { background: #f2f2f2; }
.l-k { background: #f3dd4b; color: #333; }
.l-30 { background: #4a9ccf; }
.l-100 { background: #3b87b0; }
.l-500 { background: #b02f38; }

.detail { flex: 1; min-height: 0; position: relative; overflow: hidden; }
.detail-body { padding: 2px 16px 0; }
.name { font-size: 12px; line-height: 18px; }
.name svg { vertical-align: middle; color: #8a8a8a; }
.name i { color: #7d7d7d; font-style: normal; }
.kind { font-size: 13px; line-height: 22px; color: #7d7d7d; }
.price { font-size: 29px; line-height: 28px; font-weight: 600; margin-top: 17px; }
.price em { font-style: normal; color: #449881; }
.price small { font-size: 12px; font-weight: 400; margin-left: 6px; }
.delta { display: flex; gap: 9px; color: #e5555c; font-size: 16px; line-height: 20px; font-weight: 600; }
.market { display: flex; align-items: center; color: #449881; font-size: 14px; line-height: 20px; }
.market i { width: 8px; height: 8px; border-radius: 4px; background: #449881; margin: 0 6px 0 5px; }
.news { display: flex; align-items: center; gap: 9px; height: 40px; margin-top: 11px; padding: 0 12px 0 11px; border-radius: 6px; background: #2d2840; line-height: 16px; }
.news span { flex: 1; word-break: break-all; }
.detail h3 { font-size: 14px; line-height: 20px; font-weight: 500; margin-top: 22px; }
.detail dl { margin-top: 6px; font-size: 14px; line-height: 24px; }
.detail dl div { display: flex; justify-content: space-between; }
.detail dd { font-weight: 600; }
.detail .perf-title { margin-top: 23px; }
.perf { display: grid; grid-template-columns: 1fr 1fr 1fr; gap: 8px; margin-top: 7px; }
.perf div { height: 40px; border-radius: 3px; text-align: center; font-size: 14px; line-height: 20px; padding-top: 2px; }
.perf b { display: block; font-size: 11px; line-height: 16px; font-weight: 600; color: #dbdbdb; }
.r1 { background: #241516; color: #df484c; }
.r2 { background: #38191b; color: #df484c; }
.r3 { background: #4d2225; color: #df484c; }
.g1 { background: #12201b; color: #449881; }
.g3 { background: #1e4236; color: #58a58c; }
.scroll { position: absolute; right: 2px; top: 50px; width: 4px; height: 166px; border-radius: 2px; background: #4d4d4d; }

.rail { display: flex; flex-direction: column; align-items: center; margin-left: -4px; border-left: 1px solid #333; padding: 5px 0 6px; gap: 7px; }
.rail button { width: 38px; height: 38px; border-radius: 6px; position: relative; flex: none; }
.rail .on { background: #3d3d3d; }
.rail .chat .badge { right: 0; top: 0; }
.rail-low { margin-top: auto; display: flex; flex-direction: column; align-items: center; gap: 7px; }
.rail .round { width: 36px; height: 36px; border-radius: 18px; background: #fff; }
.rail .bot { width: 50px; height: 36px; padding-right: 10px; background: #fff; border-radius: 18px 0 0 18px; }
```

FILE: chart.js
```js
// one bar per minute, first bar is 20:59: [up, body top, body bottom, high, low]
const bars = [
  [1,545,560,533],[1,560,565],[1,529,543],[1,511,530,476],[1,454,512],[1,373,455,304],[0,373,426,373,434],[1,284,426,265],
  [0,284,295,284,301],[0,294,333,294,344],[0,332,377,323],[1,372,377,372,404],[0,372,400],[1,319,400,295],[1,293,320,279],
  [0,293,294],[0,293,334],[1,332,334,332,346],[1,332,333,332,346],[1,327,333],[1,301,328],[1,300,302,300,311],[1,288,301],
  [1,242,289,231],[1,208,244,182,256],[1,205,209,193,212],[0,205,273],[1,226,273],[1,214,227,214,251],[1,174,215],
  [0,174,181],[0,180,187],[1,174,187,174,195],[1,142,174],[1,94,143],[1,61,95],[0,61,62,51],[0,61,116],[1,98,116,98,126],
  [0,98,119],[0,118,202],[0,201,213],[0,212,230,180],[0,229,271,223],[1,218,271],[1,218,219,211],[0,218,267],[1,245,267],
  [0,245,282],[1,277,282,277,297],[1,265,278],[0,265,277,257],[1,270,277,270,297],[1,270,271],[1,270,271],[0,270,280,270,297],
  [1,279,280],[1,270,280],[1,270,271],[1,212,271],[0,212,222],[0,221,231,218,244],[1,230,231],[1,230,231],[1,219,231],
  [1,201,220],[0,200,230],[0,229,267,229,296],[0,266,285],[0,284,312],[1,311,312],[0,311,355],[1,354,355],[0,354,394],
  [0,393,422],[1,403,422,403,437],[0,403,474],[1,466,474,466,516],[1,435,467,435,479],[1,425,436,412],[0,425,465,425,470],
  [1,403,465],[1,365,404],[1,365,366,353,396],[1,353,366],[1,328,354],[1,328,329,328,345],[0,328,332,317],[1,270,332],
  [1,259,271],[1,256,260],[0,256,285],[0,284,285],[1,284,285,284,305],[0,284,332],[0,331,361],[1,321,361],[1,313,322],
  [1,245,314],[1,219,246],[1,153,220],[1,97,154,84,166],[0,97,124],[1,123,124],[0,123,172],[1,167,172,161],[1,128,168],
  [0,128,181],[0,180,204,180,223],[1,203,204,190],[0,203,239,203,245],[1,229,239,229,245],[0,229,242],[1,234,242,234,264],
  [0,234,235],[1,214,235],[1,176,215],[1,151,177],[0,151,193],[0,192,253],[0,252,291],[0,290,366],[1,359,366,321,377],
  [1,337,360],[1,262,338],[0,262,263,262,294],[1,216,263],[1,173,217]
];

const upper = '18,543 30,522 37,516 50,484 55,457 60,427 67,397 73,367 77,327 83,294 90,267 97,254 104,248 110,246 117,234 124,222 130,216 137,212 144,208 150,205 164,204 170,218 177,227 184,231 191,222 197,204 205,205 211,199 217,188 224,169 231,157 237,149 244,145 251,127 258,102 265,80 271,51 284,36 291,35 298,39 311,51 318,48 345,48 355,43 371,41 378,42 385,47 391,64 398,89 405,117 412,137 418,174 425,201 438,208 447,208 453,206 459,205 465,202 473,200 485,200 499,193 513,177 526,156 532,151 539,137 545,131 552,131 559,141 566,151 573,166 586,192 592,214 599,237 606,258 612,268 619,266 626,256 632,243 639,234 652,218 659,215 666,215 672,217 679,222 686,216 693,205 697,192 703,167 707,144 713,122 720,106 727,97 733,89 740,76 748,72 760,68 786,69 793,73 800,85 813,97 820,98 827,96 840,91 847,91 853,99 867,114 874,127 880,126';
const basis = '86,543 98,516 117,467 130,430 137,417 150,397 163,375 170,359 184,333 197,312 204,305 211,303 217,299 224,291 237,271 244,258 257,242 271,217 283,194 291,182 301,176 311,171 340,173 345,174 357,182 373,192 385,202 403,232 420,251 425,253 443,256 450,255 472,251 490,253 498,256 512,264 518,269 526,278 532,284 539,294 552,312 572,343 586,357 599,370 612,378 620,377 632,372 647,365 659,356 667,352 679,338 693,317 707,287 723,257 733,244 746,228 760,222 773,219 786,214 793,209 800,202 813,187 820,184 827,185 833,192 840,207 853,228 868,238 874,241 880,241';
const lower = '164,543 170,499 180,451 184,435 191,421 197,422 204,403 224,411 231,404 237,393 243,379 248,374 252,373 257,377 264,386 271,381 278,367 285,349 291,330 298,315 305,299 311,291 317,295 331,298 338,297 345,299 358,323 372,342 385,357 391,360 398,356 405,348 412,342 420,321 425,307 437,303 453,302 465,304 472,303 485,306 499,319 507,341 513,354 520,379 527,404 533,424 539,457 545,478 552,494 559,505 566,520 572,524 579,524 586,521 592,515 599,503 606,493 612,488 619,490 632,501 647,504 653,502 659,495 666,491 672,475 679,453 686,442 693,432 699,417 706,423 713,423 720,420 727,410 740,396 746,384 760,377 767,375 786,360 793,344 800,316 808,292 813,276 820,270 827,275 833,292 837,309 843,337 853,358 867,361 874,356 880,356';
const rsi = '0,115 3,99 11,84 17,82 30,83 37,111 43,86 50,78 57,58 63,38 70,68 77,37 83,42 90,62 97,82 104,81 110,93 117,71 124,64 130,64 137,84 150,84 157,83 165,73 170,72 177,68 184,52 191,42 197,41 204,88 211,72 217,67 224,54 237,63 244,58 251,48 257,34 264,26 271,26 278,66 284,61 291,75 298,123 305,129 311,136 318,155 324,129 331,129 338,151 345,140 351,156 358,154 365,147 371,152 378,149 391,149 398,154 405,154 412,147 418,146 421,130 425,101 438,116 452,116 459,107 465,93 472,122 478,152 485,164 492,180 499,180 505,203 512,204 519,221 525,231 532,213 539,236 545,229 552,201 559,192 566,207 572,162 579,139 586,138 592,131 599,116 606,116 612,119 619,85 626,80 632,79 639,101 653,101 659,137 666,154 673,128 679,123 686,87 693,75 699,51 706,36 713,54 720,54 726,86 733,84 740,69 746,101 753,113 760,114 766,133 773,128 780,134 787,130 793,130 800,117 807,97 813,85 820,113 827,145 833,165 840,190 847,187 853,172 860,134 867,134 880,96';
const rsiMa = '0,149 10,145 23,134 30,128 50,113 57,107 63,97 71,91 83,77 91,72 113,71 124,70 130,66 143,66 157,71 164,72 177,76 185,75 197,70 223,69 237,66 257,59 271,53 285,54 298,60 311,68 323,80 338,92 345,98 352,108 373,133 385,142 403,147 420,148 433,142 439,141 457,134 466,129 473,127 485,128 499,132 512,141 526,158 533,166 545,181 566,201 573,202 580,200 592,193 607,181 612,173 626,154 632,142 639,133 653,119 659,115 678,113 693,106 706,96 720,92 727,92 734,91 740,89 747,88 753,87 760,84 773,85 783,90 800,104 820,111 827,115 840,128 853,137 867,138 875,136 880,134';

const GREEN = '#449881', RED = '#df484c', YELLOW = '#f7e463';
const barX = i => Math.round(37 + i * 6.69);
const priceY = p => Math.round(37 + (84500 - p) * 1.3724);
const times = ['21:00','21:15','21:30','21:45','22:00','22:15','22:30','22:45','23:00','23:15','23:30','23:45','21','00:15'];
const money = p => p.toLocaleString('en-US', { minimumFractionDigits: 2 });

const line = (x1, y1, x2, y2, color, extra = '') =>
  `<line x1="${x1}" y1="${y1}" x2="${x2}" y2="${y2}" stroke="${color}" ${extra}/>`;
const hline = (y, color, extra) => line(0, y + .5, '100%', y + .5, color, extra);
const poly = (pts, color) => `<polyline points="${pts}" stroke="${color}" stroke-width="1.2"/>`;
const vgrid = times.map((t, n) => line(barX(n * 15) + .5, 0, barX(n * 15) + .5, '100%', '#1f1f1f')).join('');

// price pane
let out = vgrid;
for (let p = 84525; p >= 84150; p -= 25) out += hline(priceY(p), '#1f1f1f');

out += `<polygon points="${upper} ${lower.split(' ').reverse().join(' ')}" fill="#2196f3" fill-opacity=".05" stroke="none"/>`;
out += poly(upper, '#b94447') + poly(basis, '#3259cc') + poly(lower, '#347c67');

bars.forEach(([up, top, bottom, high = top, low = bottom], n) => {
  const x = barX(n - 1), c = up ? GREEN : RED;
  out += line(x + .5, high, x + .5, low, c) + `<rect x="${x - 2}" y="${top}" width="5" height="${bottom - top}" fill="${c}" stroke="none"/>`;
});

// short position
out += `<rect x="840" y="252" width="229" height="38" fill="${RED}" fill-opacity=".2" stroke="none"/>
  <rect x="840" y="290" width="229" height="88" fill="${GREEN}" fill-opacity=".22" stroke="none"/>
  <rect x="847" y="290" width="33" height="70" fill="#2a7f8f" fill-opacity=".12" stroke="none"/>`;
out += line(840, 290.5, 1069, 290.5, '#808080');
out += line(844, 290, 847, 374, '#6b8f84', 'stroke-dasharray="4 4"') + '<path d="M842 373l5 4 5-4" stroke="#6b8f84"/>';

// horizontal levels
out += hline(61, '#fff', 'stroke-dasharray="5 6"');
out += hline(313, '#fff', 'stroke-dasharray="5 6"');
out += hline(474, '#fff', 'stroke-dasharray="5 6"');
out += hline(173, GREEN, 'stroke-dasharray="1 2"');
out += line(0, 306, '100%', 306, '#fff', 'stroke-width="2"');

// fib retracement
[[61, '(84,482.16)', '#808080'], [170, '0.786 (84,402.77)', '#57aec2'], [256, '0.618 (84,340.44)', '#3c8774'],
 [316, '0.5 (84,296.67)', '#62ab66'], [376, '0.382 (84,252.89)', '#e0973c'], [450, '0.236 (84,198.72)', '#d2484c']].forEach(([y, text, c]) => {
  out += line(277, y + .5, 1122, y + .5, c);
  out += `<text x="270" y="${y + 4}" text-anchor="end" style="fill:${c}">${text}</text>`;
});
out += line(278, 61, 1077, 543, '#8a8a8a', 'stroke-width="2" stroke-dasharray="10 12"');
out += line(11, 543, 305, 108, YELLOW, 'stroke-width="2"');
out += line(278, 61, 471, 200, YELLOW, 'stroke-width="2"');
out += line(278, 61, 639, 255, YELLOW, 'stroke-width="2"');
out += '<circle cx="880.5" cy="530" r="10" stroke="#8e4ea3" stroke-width="1.5"/><path d="M883 525l-7 6h4l-2 5 7-6h-4z" fill="#a35bb8" stroke="none"/>';
document.getElementById('plot').innerHTML = out;

// price scale
const tag = (y, h, w, bg, color, text, bold) =>
  `<rect x="1" y="${y}" width="${w}" height="${h}" rx="1" fill="${bg}" stroke="none"/><text x="8" y="${y + 12}" style="fill:${color};font-weight:${bold ? 600 : 400}">${text}</text>`;
out = '';
for (let p = 84525; p >= 84150; p -= 25) {
  if (![84400, 84350, 84300, 84250].includes(p)) out += `<text x="8" y="${priceY(p) + 3}">${money(p)}</text>`;
}
out += tag(53, 17, 66, '#fff', '#0f0f0f', '84,482.17');
out += tag(119, 17, 66, RED, '#fff', '84,434.43', 1);
out += tag(165, 31, 66, GREEN, '#fff', '84,400.51', 1) + '<text x="8" y="191" style="fill:#c9e2da">00:29</text>';
out += tag(233, 17, 66, '#3b63f5', '#fff', '84,350.76', 1);
out += tag(250, 17, 66, RED, '#fff', '84,343.20', 1);
out += tag(282, 17, 66, '#808080', '#fff', '84,315.21', 1);
out += tag(299, 17, 66, '#fff', '#0f0f0f', '84,303.96');
out += tag(316, 17, 66, '#fff', '#0f0f0f', '84,298.67');
out += tag(348, 17, 66, GREEN, '#fff', '84,267.10', 1);
out += tag(370, 17, 66, GREEN, '#fff', '84,251.58', 1);
out += tag(465, 17, 66, '#fff', '#0f0f0f', '84,182.21');
document.getElementById('priceAxis').innerHTML = out;

// rsi pane
const levels = [[80, 13], [70, 52], [60, 91], [50, 130], [40, 169], [30, 207], [20, 246]];
out = `<defs>
  <clipPath id="over"><rect width="2000" height="52"/></clipPath>
  <clipPath id="under"><rect y="207" width="2000" height="60"/></clipPath>
  <linearGradient id="gOver" gradientUnits="userSpaceOnUse" x1="0" y1="20" x2="0" y2="52"><stop stop-color="#4caf50" stop-opacity=".22"/><stop offset="1" stop-color="#4caf50" stop-opacity=".05"/></linearGradient>
  <linearGradient id="gUnder" gradientUnits="userSpaceOnUse" x1="0" y1="207" x2="0" y2="240"><stop stop-color="#df484c" stop-opacity=".08"/><stop offset="1" stop-color="#df484c" stop-opacity=".3"/></linearGradient>
</defs>`;
out += '<rect y="52" width="100%" height="155" fill="#7e57c2" fill-opacity=".1" stroke="none"/>' + vgrid;
levels.forEach(([v, y]) => {
  const edge = v === 70 || v === 30;
  out += edge || v === 50 ? hline(y, edge ? '#787880' : '#4d4a55', 'stroke-dasharray="5 6"') : hline(y, 'rgba(255,255,255,.06)');
});
out += `<polygon points="${rsi} 880,52 0,52" fill="url(#gOver)" clip-path="url(#over)" stroke="none"/>`;
out += `<polygon points="${rsi} 880,207 0,207" fill="url(#gUnder)" clip-path="url(#under)" stroke="none"/>`;
out += poly(rsi, '#6a54ab') + poly(rsiMa, '#dcc25a');
document.getElementById('rsiPlot').innerHTML = out;

out = levels.map(([v, y]) => `<text x="8" y="${y + 4}">${v}.00</text>`).join('');
out += tag(88, 17, 43, '#7e57c2', '#fff', '58.66', 1) + tag(126, 17, 43, '#f5d85a', '#0f0f0f', '48.82');
document.getElementById('rsiAxis').innerHTML = out;

document.getElementById('timeAxis').innerHTML =
  times.map((t, n) => `<text x="${barX(n * 15)}" y="18" text-anchor="middle"${t === '21' ? ' font-weight="700"' : ''}>${t}</text>`).join('');
```
